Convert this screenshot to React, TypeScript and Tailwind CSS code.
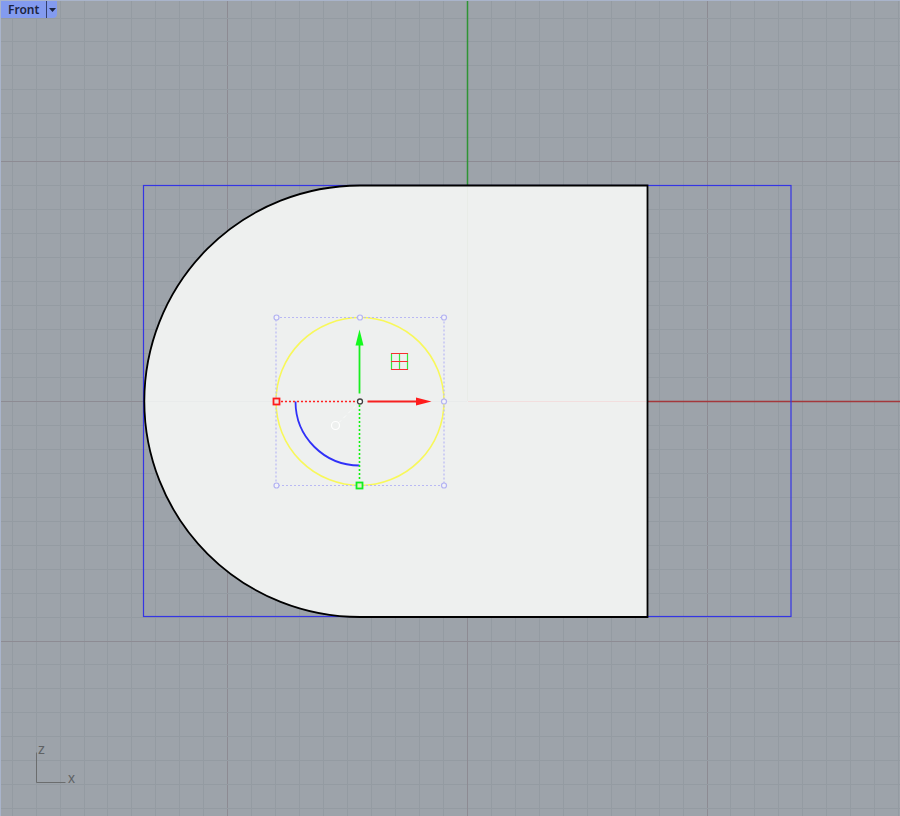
// ─── Scene ────────────────────────────────────────────────────────────────────

const VIEW = { width: 900, height: 816 };
const ORIGIN = { x: 467.5, y: 401.5 };
const CELL = 23.96;

interface GridLine {
  at: number;
  major: boolean;
}

// Every tenth line counted from the origin is a major one; the axes are drawn apart
function gridLines(origin: number, size: number): GridLine[] {
  const lines: GridLine[] = [];
  for (let i = -Math.floor(origin / CELL); origin + i * CELL < size; i++) {
    if (i !== 0) lines.push({ at: Math.round(origin + i * CELL - 0.6) + 0.5, major: i % 10 === 0 });
  }
  return lines;
}

const columns = gridLines(ORIGIN.x, VIEW.width);
const rows = gridLines(ORIGIN.y, VIEW.height);

const cageHandles = [
  { x: 276.5, y: 317.5 },
  { x: 360, y: 317.5 },
  { x: 444, y: 317.5 },
  { x: 444, y: 401.5 },
  { x: 276.5, y: 485.5 },
  { x: 444, y: 485.5 },
];

function Grid() {
  return (
    <g strokeWidth={1}>
      {columns.map(({ at, major }) => (
        <line
          key={at}
          x1={at}
          x2={at}
          y1={0}
          y2={VIEW.height}
          className={major ? "stroke-[#8d8b93]" : "stroke-[#949ba2]"}
        />
      ))}
      {rows.map(({ at, major }) => (
        <line
          key={at}
          x1={0}
          x2={VIEW.width}
          y1={at}
          y2={at}
          className={major ? "stroke-[#8d8b93]" : "stroke-[#949ba2]"}
        />
      ))}
      <line x1={0} x2={ORIGIN.x} y1={401.5} y2={401.5} className="stroke-[#8d8b93]" />
      <line x1={467.5} x2={467.5} y1={ORIGIN.y} y2={VIEW.height} className="stroke-[#8d8b93]" />
      <line
        x1={467.5}
        x2={467.5}
        y1={0}
        y2={ORIGIN.y}
        className="stroke-[#2f9434]"
        strokeWidth={1.5}
      />
      <line
        x1={ORIGIN.x}
        x2={VIEW.width}
        y1={401.5}
        y2={401.5}
        className="stroke-[#a4383c]"
        strokeWidth={1.5}
      />
    </g>
  );
}

function Solid() {
  return (
    <g fill="none">
      <rect
        x={143.5}
        y={185.5}
        width={647.5}
        height={431}
        className="stroke-[#3535e4]"
        strokeWidth={1.2}
      />
      <path
        d="M360 185.5H647.5V617H360A215.75 215.75 0 0 1 360 185.5Z"
        className="fill-[#eef0ef] stroke-black"
        strokeWidth={1.8}
      />
      {/* Axes showing faintly through the face */}
      <path d="M467.5 187V401" className="stroke-[#e9ece8]" />
      <path d="M468 401.5H646" className="stroke-[#f2dede]" />
      <path d="M146 401.5H467" className="stroke-[#e9ebeb]" />
    </g>
  );
}

function Gumball() {
  return (
    <g fill="none">
      <circle cx={360} cy={401.5} r={84} className="stroke-[#f8f85a]" strokeWidth={1.6} />
      <rect
        x={276}
        y={317.5}
        width={168}
        height={168}
        className="stroke-[#b9b9f4]"
        strokeWidth={1.2}
        strokeDasharray="2 2"
      />
      {cageHandles.map(({ x, y }) => (
        <circle
          key={`${x}-${y}`}
          cx={x}
          cy={y}
          r={2.5}
          className="fill-[#f3f3f8] stroke-[#b3b3f2]"
          strokeWidth={1.2}
        />
      ))}

      {/* Extrude handle */}
      <path d="M356 405.5L339 422.5" className="stroke-[#fafbfa]" strokeDasharray="4 3" />
      <circle cx={335.5} cy={425.5} r={4} className="stroke-white" strokeWidth={1.2} />

      {/* Rotation arc */}
      <path
        d="M295.5 401.5A64 64 0 0 0 359.5 465.5"
        className="stroke-[#3030f8]"
        strokeWidth={1.8}
      />

      {/* Scale handles */}
      <path d="M281 401.5H357" className="stroke-[#ff2020]" strokeWidth={1.6} strokeDasharray="2 2" />
      <path d="M359.5 405V481" className="stroke-[#10f010]" strokeWidth={1.6} strokeDasharray="2 2" />
      <rect
        x={273.5}
        y={398.5}
        width={6}
        height={6}
        className="fill-[#f0e4df] stroke-[#ff1c1c]"
        strokeWidth={1.8}
      />
      <rect
        x={356.5}
        y={482.5}
        width={6}
        height={6}
        className="fill-[#e4f2c8] stroke-[#12ee20]"
        strokeWidth={1.8}
      />

      {/* Move arrows */}
      <path d="M367.5 401.5H417" className="stroke-[#f62020]" strokeWidth={1.8} />
      <path d="M431.5 401.5L416 397.5V405.5Z" className="fill-[#ff1c1c]" />
      <path d="M359.5 393.5V345" className="stroke-[#18ee20]" strokeWidth={1.8} />
      <path d="M359.5 329.5L355.5 345.5H363.5Z" className="fill-[#14fa1c]" />

      {/* Plane handle */}
      <path
        d="M391.5 353.5V369.5M399.5 353.5V369.5M407.5 353.5V369.5"
        className="stroke-[#30ec38]"
        strokeWidth={1.2}
      />
      <path
        d="M391 353.5H408M391 361.5H408M391 369.5H408"
        className="stroke-[#f83030]"
        strokeWidth={1.2}
      />

      <circle cx={360} cy={401.5} r={2.5} className="fill-white stroke-[#404040]" strokeWidth={1.3} />
    </g>
  );
}

function AxisIcon() {
  return (
    <g className="font-['Liberation_Sans',sans-serif] text-sm">
      <path d="M36.5 752.5V782.5H65.5" fill="none" className="stroke-[#6b6d6e]" />
      <text x={38} y={754} className="fill-[#5f6264]">
        z
      </text>
      <text x={68} y={783} className="fill-[#5f6264]">
        x
      </text>
    </g>
  );
}

// ─── Viewport title ───────────────────────────────────────────────────────────

function ViewportTitle() {
  return (
    <div className="absolute top-0 left-0 flex h-[17px] items-stretch rounded-br-sm bg-[#839bef] font-['Noto_Sans',sans-serif] text-xs font-semibold text-[#1c2440]">
      <button type="button" className="flex items-center px-[7px] leading-4">
        Front
      </button>
      <button
        type="button"
        aria-label="Viewport menu"
        className="flex w-[11px] items-center justify-center border-l border-[#34406c]"
      >
        <svg width={7} height={4} viewBox="0 0 7 4" aria-hidden="true">
          <path d="M0 0H7L3.5 4Z" fill="currentColor" />
        </svg>
      </button>
    </div>
  );
}

export default function App() {
  return (
    <main className="relative h-screen w-full overflow-hidden border-t border-l border-[#a9b4cb] bg-[#9da3aa]">
      <svg
        viewBox={`1 1 ${VIEW.width - 1} ${VIEW.height - 1}`}
        preserveAspectRatio="xMidYMid slice"
        className="block h-full w-full"
        role="img"
        aria-label="Front view"
      >
        <Grid />
        <Solid />
        <Gumball />
        <AxisIcon />
      </svg>
      <ViewportTitle />
    </main>
  );
}
